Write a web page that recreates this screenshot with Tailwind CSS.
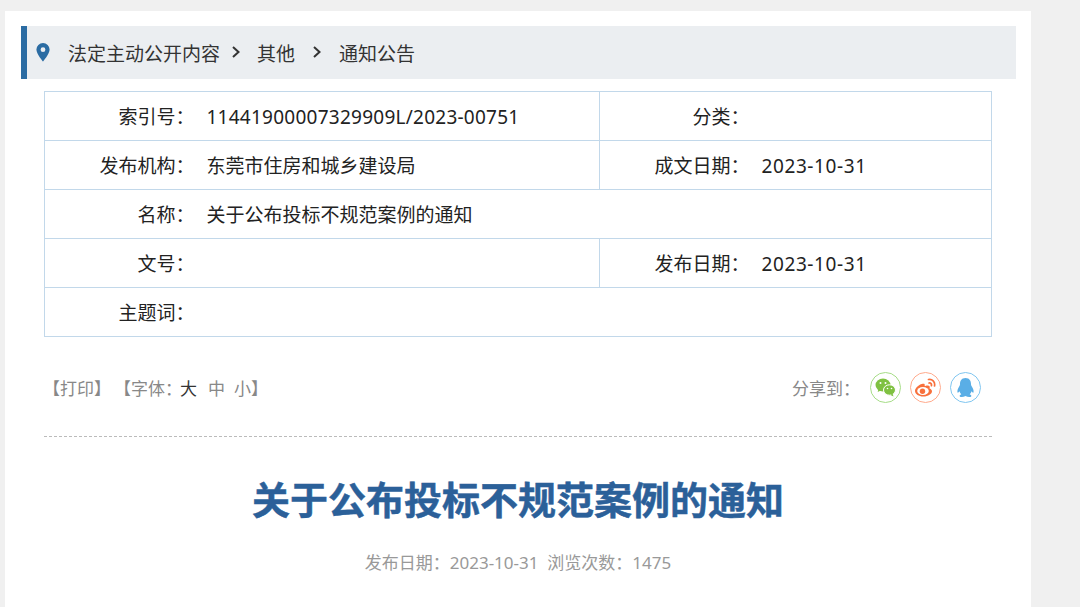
<!DOCTYPE html>
<html lang="zh-CN">
<head>
    <meta charset="UTF-8">
    <title>关于公布投标不规范案例的通知</title>
    <script src="https://cdn.jsdelivr.net/npm/@tailwindcss/browser@4"></script>
</head>
<body class="bg-[#f0f0f0] h-[607px] overflow-hidden font-['Noto_Sans','Noto_Sans_CJK_SC',sans-serif]">
    <div class="ml-[5px] w-[1026px] h-[596px] bg-white pt-[15px] pl-[16px] relative top-[11px]">
        <!-- breadcrumb -->
        <div class="w-[995px] h-[53px] pt-[2px] bg-[#ebeef1] border-l-[6px] border-[#2b6ca3] flex items-center text-[19px] text-[#333]">
            <svg class="ml-[9px] w-[14px] h-[19px] mb-[3px]" viewBox="0 0 14 19"><path fill="#2b6ca3" fill-rule="evenodd" d="M7 0a6.6 6.6 0 0 1 6.6 6.6C13.6 11 7 18.6 7 18.6S.4 11 .4 6.6A6.6 6.6 0 0 1 7 0zm0 4.300a2.400 2.400 0 1 0 0 4.800 2.400 2.400 0 0 0 0-4.800z"/></svg>
            <span class="ml-[18px] pt-[2px]">法定主动公开内容</span>
            <svg class="ml-[11px] w-[10px] h-[14px] mb-[3px]" viewBox="0 0 10 14"><path fill="none" stroke="#333" stroke-width="2" d="M2 2l5.500 5L2 12"/></svg>
            <span class="ml-[16px] pt-[2px]">其他</span>
            <svg class="ml-[17px] w-[10px] h-[14px] mb-[3px]" viewBox="0 0 10 14"><path fill="none" stroke="#333" stroke-width="2" d="M2 2l5.500 5L2 12"/></svg>
            <span class="ml-[17px] pt-[2px]">通知公告</span>
        </div>

        <!-- info table -->
        <table class="ml-[23px] mt-[12px] w-[948px] table-fixed border-collapse border border-[#c2d8ea] text-[19px] text-[#222] [&_td]:pt-[2px]">
            <colgroup><col class="w-[150px]"><col class="w-[405px]"><col class="w-[150px]"><col></colgroup>
            <tbody>
                <tr class="h-[49px] border-b border-[#c2d8ea]">
                    <td class="text-right">索引号：</td>
                    <td class="border-r border-[#c2d8ea] pl-[12px] tracking-[0.25px]">11441900007329909L/2023-00751</td>
                    <td class="text-right">分类：</td>
                    <td class="pl-[12px]"></td>
                </tr>
                <tr class="h-[49px] border-b border-[#c2d8ea]">
                    <td class="text-right">发布机构：</td>
                    <td class="border-r border-[#c2d8ea] pl-[12px]">东莞市住房和城乡建设局</td>
                    <td class="text-right">成文日期：</td>
                    <td class="pl-[12px] tracking-[0.6px]">2023-10-31</td>
                </tr>
                <tr class="h-[49px] border-b border-[#c2d8ea]">
                    <td class="text-right">名称：</td>
                    <td colspan="3" class="pl-[12px]">关于公布投标不规范案例的通知</td>
                </tr>
                <tr class="h-[49px] border-b border-[#c2d8ea]">
                    <td class="text-right">文号：</td>
                    <td class="border-r border-[#c2d8ea] pl-[12px]"></td>
                    <td class="text-right">发布日期：</td>
                    <td class="pl-[12px] tracking-[0.6px]">2023-10-31</td>
                </tr>
                <tr class="h-[49px]">
                    <td class="text-right">主题词：</td>
                    <td colspan="3" class="pl-[12px]"></td>
                </tr>
            </tbody>
        </table>

        <!-- tools -->
        <div class="ml-[23px] w-[948px] h-[100px] border-b border-dashed border-[#bbb] flex items-center justify-between text-[17px] text-[#888]">
            <div class="flex items-center mt-[4px]">
                <span class="-ml-[1px]">【打印】</span>
                <span class="ml-[3px]">【字体：</span>
                <span class="text-[#333] -ml-[2px]">大</span>
                <span class="ml-[11px]">中</span>
                <span class="ml-[9px]">小</span>
                <span>】</span>
            </div>
            <div class="flex items-center mr-[11px] mt-[2px]">
                <span class="text-[#888] mr-[10px] pt-[2px]">分享到：</span>
                <span class="w-[31px] h-[31px] rounded-full border border-[#a6dd87] flex items-center justify-center">
                    <svg class="w-[21px] h-[19px]" viewBox="0 0 21 19">
                        <ellipse cx="8" cy="7" rx="7.500" ry="6.500" fill="#7fc141"/>
                        <path fill="#7fc141" d="M3.500 11l-.8 3 3-1.500z"/>
                        <ellipse cx="14.500" cy="12" rx="6" ry="5.200" fill="#7fc141" stroke="#fff" stroke-width="1"/>
                        <path fill="#7fc141" d="M17.500 15.500l1 3-3-1.500z"/>
                        <circle cx="5.500" cy="5" r="1" fill="#fff"/><circle cx="10.500" cy="5" r="1" fill="#fff"/>
                        <circle cx="12.500" cy="10.500" r=".8" fill="#fff"/><circle cx="16.500" cy="10.500" r=".8" fill="#fff"/>
                    </svg>
                </span>
                <span class="ml-[9px] w-[31px] h-[31px] rounded-full border border-[#ffaa8c] flex items-center justify-center">
                    <svg class="w-[23px] h-[19px]" viewBox="0 0 23 19">
                        <path fill="#f8703c" d="M9.500 5.500C4.800 6.300 1 10 1 13c0 3 3.800 5.500 8.300 5.500 5 0 8.700-2.800 8.700-5.300 0-1.700-1.500-2.500-2.500-2.800.7-1.800.2-3-2-3-1 0-2.300.4-2.800.6.300-1.500-.2-2.800-1.700-2.500z"/>
                        <ellipse cx="9" cy="13" rx="5.800" ry="4" fill="#fff"/>
                        <circle cx="8.500" cy="13.200" r="2.700" fill="#f8703c"/>
                        <path fill="none" stroke="#f8703c" stroke-width="1.700" stroke-linecap="round" d="M14.500 1.500c3.500-.8 7 2.200 6 6.500M15 5c1.800-.3 2.800 1.100 2.400 2.700"/>
                    </svg>
                </span>
                <span class="ml-[9px] w-[31px] h-[31px] rounded-full border border-[#80c6f0] flex items-center justify-center">
                    <svg class="w-[19px] h-[20px]" viewBox="0 0 19 20">
                        <path fill="#5aaee6" d="M9.500 0C5.500 0 4 3 4 6c0 1-.2 1.500-.8 2.500C2 10.500 1 12.500 1.500 14.500c.5.500 1.300-.2 2-1.300.3 1.300 1 2.300 1.800 3-1.300.500-2 1.200-1.500 2.200.7 1 3.500.9 5.700-.4 2.200 1.300 5 1.400 5.700.4.500-1-.2-1.700-1.500-2.200.8-.7 1.500-1.700 1.800-3 .7 1.100 1.500 1.800 2 1.300.5-2-.5-4-1.700-6-.6-1-.8-1.500-.8-2.500 0-3-1.500-6-5.500-6z"/>
                    </svg>
                </span>
            </div>
        </div>

        <!-- title -->
        <h1 class="ml-[23px] w-[948px] mt-[32px] text-center text-[38px] leading-[60px] font-bold text-[#2b6099] [-webkit-text-stroke:0.5px_#2b6099]">关于公布投标不规范案例的通知</h1>
        <p class="ml-[23px] w-[948px] mt-[21px] text-center text-[17px] text-[#999]">发布日期：2023-10-31&nbsp;&nbsp;浏览次数：1475</p>
    </div>
</body>
</html>
